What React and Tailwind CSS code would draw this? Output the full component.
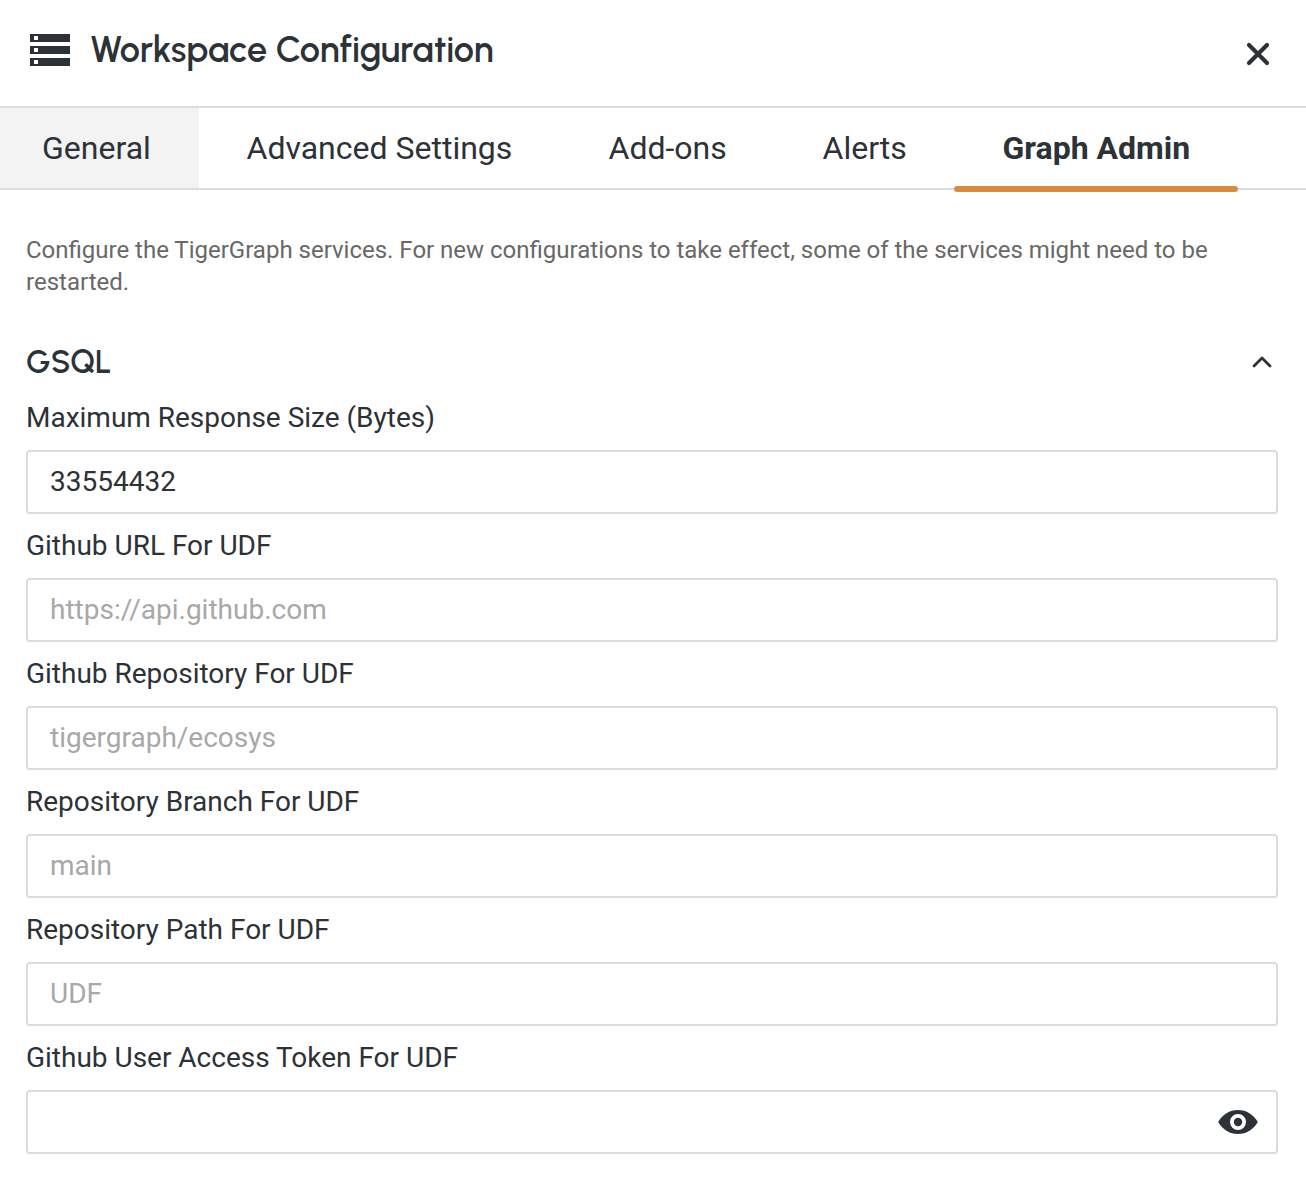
import React from "react";

const tabs = [
  { label: "General", box: "pl-[42px] w-[199px] bg-[#f3f3f3]" },
  { label: "Advanced Settings", box: "pl-[47.500px] w-[361.500px]" },
  { label: "Add-ons", box: "pl-12 w-[213.500px]" },
  { label: "Alerts", box: "pl-[48.500px] w-[180px]" },
];

const fields = [
  { label: "Maximum Response Size (Bytes)", value: "33554432" },
  { label: "Github URL For UDF", placeholder: "https://api.github.com" },
  { label: "Github Repository For UDF", placeholder: "tigergraph/ecosys" },
  { label: "Repository Branch For UDF", placeholder: "main" },
  { label: "Repository Path For UDF", placeholder: "UDF" },
  { label: "Github User Access Token For UDF", secret: true },
];

function ServerIcon() {
  return (
    <svg className="mt-[34px]" width="40" height="32" viewBox="0 0 40 32" fill="currentColor">
      <path fillRule="evenodd" d="M0 0h40v8H0zM4 2v4h4V2zM0 12h40v8H0zM4 14v4h4v-4zM0 24h40v8H0zM4 26v4h4v-4z" />
    </svg>
  );
}

function CloseIcon() {
  return (
    <svg className="mt-[42px]" width="24" height="24" viewBox="0 0 24 24" fill="none" stroke="currentColor" strokeWidth="4.200" strokeLinecap="round">
      <path d="M3 3l18 18M21 3L3 21" />
    </svg>
  );
}

function ChevronUpIcon() {
  return (
    <svg width="20" height="12" viewBox="0 0 20 12" fill="none" stroke="currentColor" strokeWidth="2.800" strokeLinecap="round" strokeLinejoin="round">
      <path d="M2 10L10 2L18 10" />
    </svg>
  );
}

function EyeIcon() {
  return (
    <svg width="40" height="24" viewBox="0 0 40 24" fill="currentColor">
      <path fillRule="evenodd" d="M0.200 12C4.500 4.600 11.500 0 20 0S35.500 4.600 39.800 12C35.500 19.400 28.500 24 20 24S4.500 19.400 0.200 12ZM20 4a8 8 0 1 0 0 16a8 8 0 1 0 0-16Z" />
      <circle cx="20" cy="12" r="4.200" />
    </svg>
  );
}

export default function App() {
  return (
    <div className="w-[1306px] h-[1192px] overflow-hidden bg-white font-['Roboto',sans-serif] text-[#2c3237]">
      <header className="h-[108px] border-b-2 border-[#dcdcdc] flex items-start justify-between pl-[30px] pr-[36px]">
        <div className="flex items-start">
          <ServerIcon />
          <h1 className="ml-5 mt-[26px] text-[36px] leading-[48px] font-semibold whitespace-nowrap font-['Urbanist','Lato',sans-serif]">Workspace Configuration</h1>
        </div>
        <CloseIcon />
      </header>
      <nav className="h-[82px] border-b-2 border-[#dcdcdc] flex text-[32px] leading-[80px] whitespace-nowrap">
        {tabs.map((t) => (
          <div key={t.label} className={t.box}>{t.label}</div>
        ))}
        <div className="flex h-[84px] w-[284px] flex-col justify-between">
          <span className="h-[78px] pl-[48.500px] font-bold">Graph Admin</span>
          <span className="h-[6px] rounded-[3px] bg-[#db8b40]" />
        </div>
      </nav>
      <main className="px-[26px] pt-[44px]">
        <p className="text-[24px] leading-8 [word-spacing:-0.040px] text-[#686868]">
          Configure the TigerGraph services. For new configurations to take effect, some of the services might need to be restarted.
        </p>
        <div className="mt-[40px] flex h-[48px] items-center justify-between pr-[8px]">
          <h2 className="text-[32px] leading-[48px] font-semibold font-['Urbanist','Lato',sans-serif]">GSQL</h2>
          <ChevronUpIcon />
        </div>
        {fields.map((f) => (
          <div key={f.label} className="h-[128px] w-[1252px]">
            <div className="h-[64px] pt-[12px] text-[28px] leading-10 tracking-[-0.010px]">{f.label}</div>
            <div className="flex h-[64px] items-center justify-between rounded-[4px] border-2 border-[#dcdcdc] pl-[22px] pr-[18px] text-[28px]">
              <span className={f.value ? "" : "text-[#a8a8a8]"}>{f.value || f.placeholder}</span>
              {f.secret && <EyeIcon />}
            </div>
          </div>
        ))}
      </main>
    </div>
  );
}
